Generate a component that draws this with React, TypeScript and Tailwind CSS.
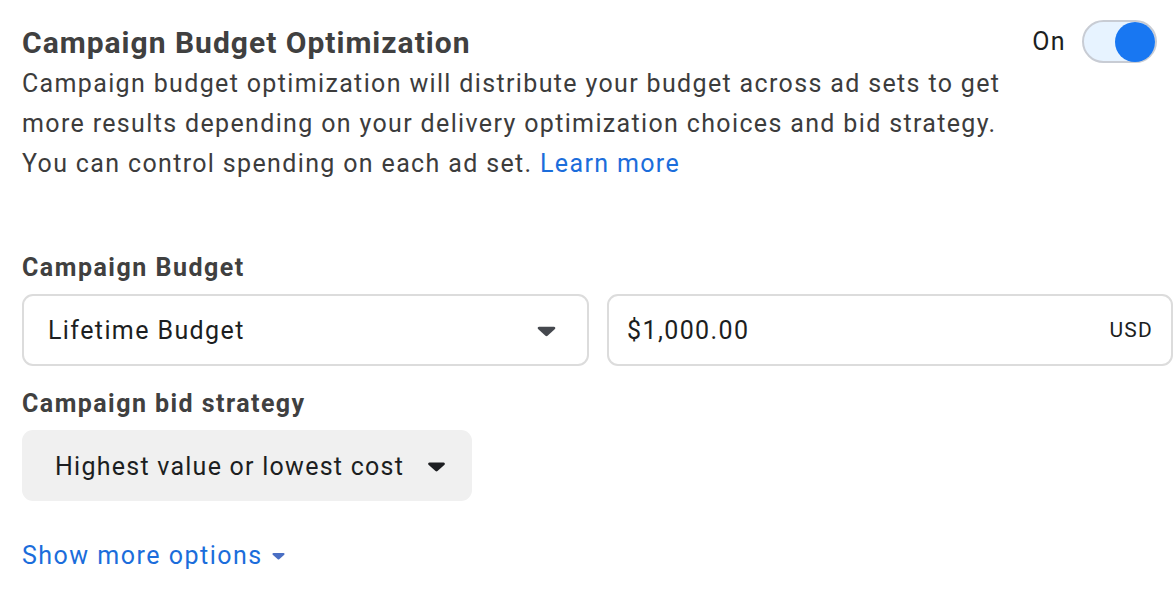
import React from "react";

function Caret({ className }: { className: string }) {
  return (
    <svg viewBox="0 0 18 11" className={className}>
      <path d="M2 1.5h14c1.2 0 1.8 1.3 1 2.2l-7 6.4c-.6.5-1.4.5-2 0l-7-6.4C.2 2.8.8 1.5 2 1.5z" fill="currentColor" />
    </svg>
  );
}

export default function App() {
  return (
    <div
      className="w-[1175px] h-[604px] bg-white pl-[22px] pr-[2px] pt-[20px] text-[#3c3c3c]"
      style={{ fontFamily: "Roboto, 'Liberation Sans', sans-serif" }}
    >
      <div className="flex items-start justify-between">
        <div className="flex flex-col">
          <h1 className="mt-[5px] text-[30px] leading-[36px] font-bold tracking-[1px] text-[#404040] whitespace-nowrap">
            Campaign Budget Optimization
          </h1>
          <p className="mt-[3px] text-[25px] leading-[40px] tracking-[1.35px] text-[#3c3c3c] whitespace-nowrap">
            <span className="block">Campaign budget optimization will distribute your budget across ad sets to get</span>
            <span className="block">more results depending on your delivery optimization choices and bid strategy.</span>
            <span className="block">
              You can control spending on each ad set. <span className="text-[#1b6ddb]">Learn more</span>
            </span>
          </p>
        </div>
        <div className="flex items-center gap-[16px] mr-[16px]">
          <span className="text-[25px] leading-[32px] tracking-[1.4px] text-[#1c1e21]">On</span>
          <div className="w-[75px] h-[43px] rounded-full border-2 border-[#c8ccd4] bg-[#e7f3ff] flex items-center justify-end">
            <div className="w-[40px] h-[40px] rounded-full bg-[#1877f2]" />
          </div>
        </div>
      </div>

      <div className="mt-[68px] text-[25px] leading-[32px] font-bold tracking-[1.5px] text-[#404040]">Campaign Budget</div>
      <div className="mt-[10px] flex gap-[18px]">
        <div className="w-[567px] h-[72px] rounded-[11px] border-2 border-[#dcdcdc] flex items-center justify-between pl-[24px] pr-[31px] pt-[2px]">
          <span className="text-[25px] tracking-[1.4px] text-[#1c1e21]">Lifetime Budget</span>
          <Caret className="w-[19px] h-[12px] text-[#45484e]" />
        </div>
        <div className="w-[566px] h-[72px] rounded-[11px] border-2 border-[#dcdcdc] flex items-center justify-between pl-[18px] pr-[18px] pt-[2px]">
          <span className="text-[25px] tracking-[1.4px] text-[#1c1e21]">$1,000.00</span>
          <span className="text-[21px] tracking-[1.2px] text-[#1c1e21]">USD</span>
        </div>
      </div>

      <div className="mt-[22px] text-[25px] leading-[32px] font-bold tracking-[1.45px] text-[#404040]">Campaign bid strategy</div>
      <div className="mt-[10px] inline-flex h-[71px] items-center gap-[23px] rounded-[11px] bg-[#f0f0f0] pl-[33px] pr-[26px] pt-[2px]">
        <span className="text-[25px] tracking-[1.25px] text-[#1c1e21] whitespace-nowrap">Highest value or lowest cost</span>
        <Caret className="w-[19px] h-[11px] text-[#1c1e21]" />
      </div>

      <div className="mt-[39px] flex items-center gap-[9px] text-[25px] leading-[32px] tracking-[1.5px] text-[#1b6ddb]">
        <span>Show more options</span>
        <Caret className="w-[13px] h-[8px] text-[#4a6fc4]" />
      </div>
    </div>
  );
}
